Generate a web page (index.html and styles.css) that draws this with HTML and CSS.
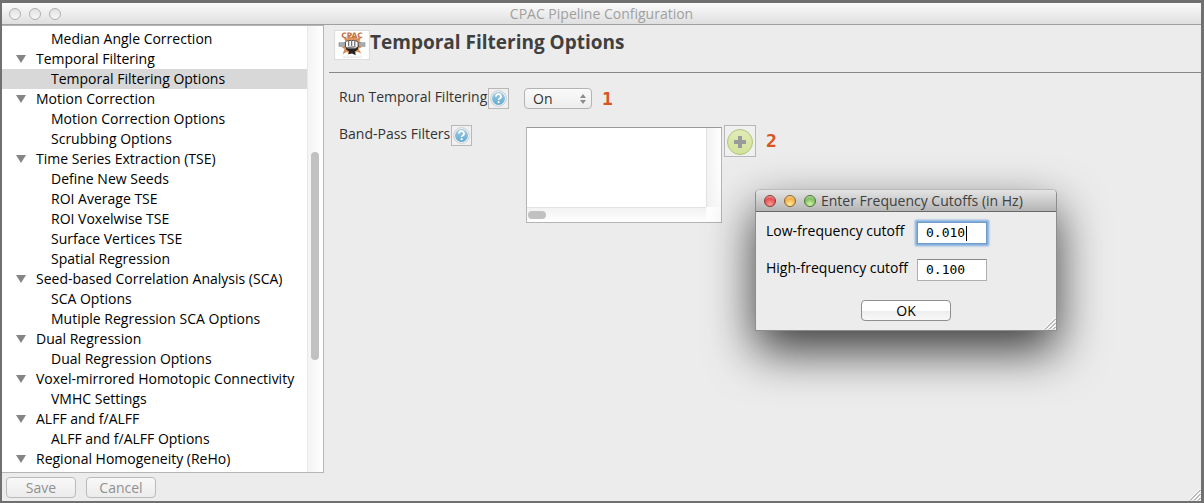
FILE: index.html
```html
<!DOCTYPE html>
<html lang="en">
<head>
<meta charset="utf-8">
<title>CPAC Pipeline Configuration</title>
<link rel="stylesheet" href="styles.css">
</head>
<body>
<svg class="defs" width="0" height="0" aria-hidden="true">
  <defs>
    <linearGradient id="blue" x1="0" y1="0" x2="0" y2="1">
      <stop offset="0" stop-color="#a4cde3"/><stop offset="1" stop-color="#5fa9d2"/>
    </linearGradient>
    <linearGradient id="lime" x1="0" y1="0" x2="0" y2="1">
      <stop offset="0" stop-color="#e2ebb9"/><stop offset="1" stop-color="#d2e29a"/>
    </linearGradient>
    <radialGradient id="burst"><stop offset="0" stop-color="#f0b080"/><stop offset="1" stop-color="#d8894f"/></radialGradient>
    <symbol id="help" viewBox="0 0 19 19">
      <circle cx="9.5" cy="9.5" r="7.8" fill="#f6f6f6" stroke="#c6cdd1"/>
      <circle cx="9.5" cy="9.5" r="6.5" fill="url(#blue)"/>
      <path d="M7 7.600a2.500 2.300 0 1 1 3.800 1.800c-.9.600-1.200.9-1.200 1.700" fill="none" stroke="#fff" stroke-width="1.700"/>
      <circle cx="9.6" cy="13.2" r="1.1" fill="#fff"/>
    </symbol>
    <symbol id="grip" viewBox="0 0 12 12">
      <path d="M1 11.500 11.500 1M5 11.500 11.500 5M9 11.500 11.500 9" fill="none" stroke="#fff" stroke-width="2.500"/>
      <path d="M1 11.500 11.500 1M5 11.500 11.500 5M9 11.500 11.500 9" fill="none" stroke="#777"/>
    </symbol>
  </defs>
</svg>
<div class="window">
  <header class="titlebar">
    <span class="lights"><i></i><i></i><i></i></span>
    <span class="title">CPAC Pipeline Configuration</span>
  </header>
  <div class="body">
    <nav class="sidebar">
      <ul class="tree">
        <li class="leaf">Median Angle Correction</li>
        <li class="branch">Temporal Filtering</li>
        <li class="leaf selected">Temporal Filtering Options</li>
        <li class="branch">Motion Correction</li>
        <li class="leaf">Motion Correction Options</li>
        <li class="leaf">Scrubbing Options</li>
        <li class="branch">Time Series Extraction (TSE)</li>
        <li class="leaf">Define New Seeds</li>
        <li class="leaf">ROI Average TSE</li>
        <li class="leaf">ROI Voxelwise TSE</li>
        <li class="leaf">Surface Vertices TSE</li>
        <li class="leaf">Spatial Regression</li>
        <li class="branch">Seed-based Correlation Analysis (SCA)</li>
        <li class="leaf">SCA Options</li>
        <li class="leaf">Mutiple Regression SCA Options</li>
        <li class="branch">Dual Regression</li>
        <li class="leaf">Dual Regression Options</li>
        <li class="branch">Voxel-mirrored Homotopic Connectivity</li>
        <li class="leaf">VMHC Settings</li>
        <li class="branch">ALFF and f/ALFF</li>
        <li class="leaf">ALFF and f/ALFF Options</li>
        <li class="branch">Regional Homogeneity (ReHo)</li>
      </ul>
      <div class="track"><div class="thumb"></div></div>
    </nav>
    <main class="page">
      <div class="heading">
        <svg class="logo" viewBox="0 0 36 30" aria-hidden="true">
          <path fill="#fff" d="M0 0h36v30H0z"/>
          <path fill="url(#burst)" d="M9 6l4 2 2-3 3 2 3-2 2 3 5-2-2 5 3 2-3 2 2 3-3 1 3 5-5-2-2 3-3-2-4 2-1-3-5 3 2-6-3-1 3-2-3-3 4-1z"/>
          <path fill="#a9adb0" stroke="#777" stroke-width=".5" d="M4 12.500h7v4H4zM25 12.500h7v4h-7z"/>
          <path fill="#222" d="M11 16h14l-1 4-3 2 1 4-4-2-4 1 1-3-3-2z"/>
          <path fill="#fff" stroke="#222" stroke-width=".8" d="M11 12q1-2 3.500-1.500 1.500-1 3 0 2-1 3.500 0 3-.5 3.500 2V17l-3 2h-8L11 17z"/>
          <path stroke="#222" stroke-width=".9" fill="none" d="M14.500 11v5M17.700 11v5M21 11v5M13 17.500l9-.5"/>
          <text class="logo-text" x="18" y="8" text-anchor="middle">CPAC</text>
          <path stroke="#bbb" stroke-width=".7" stroke-dasharray="1 .5" d="M8 28h21"/>
        </svg>
        <h1>Temporal Filtering Options</h1>
      </div>
      <form class="options">
        <div class="field"><label for="run">Run Temporal Filtering</label><button type="button" class="help" aria-label="Help: Run Temporal Filtering"><svg><use href="#help"/></svg></button></div>
        <div class="control">
          <span class="popup"><select id="run"><option>On</option><option>Off</option></select>
            <svg viewBox="0 0 6 12" aria-hidden="true"><path fill="#8c8c8c" d="M3 1l3 4H0zM3 11l3-4H0z"/></svg></span>
          <span class="step first">1</span>
        </div>
        <div class="field"><span>Band-Pass Filters</span><button type="button" class="help" aria-label="Help: Band-Pass Filters"><svg><use href="#help"/></svg></button></div>
        <div class="control filters">
          <div class="listbox" role="listbox" aria-label="Band-Pass Filters">
            <div class="items"></div><div class="vbar"></div><div class="hbar"><div class="knob"></div></div>
          </div>
          <button type="button" class="add" aria-label="Add filter"><svg viewBox="0 0 30 30"><circle cx="15" cy="16" r="12.500" fill="url(#lime)" stroke="#afc678"/><path d="M13 10h4v4h4v4h-4v4h-4v-4H9v-4h4z" fill="#9a9a9a"/></svg></button>
          <span class="step">2</span>
        </div>
      </form>
    </main>
  </div>
  <footer class="footer">
    <button type="button" disabled>Save</button><button type="button" disabled>Cancel</button>
    <svg class="grip"><use href="#grip"/></svg>
  </footer>
</div>
<section class="dialog" role="dialog" aria-labelledby="dlg">
  <header class="dialog-bar">
    <span class="lights color"><i></i><i></i><i></i></span>
    <span id="dlg">Enter Frequency Cutoffs (in Hz)</span>
  </header>
  <form class="dialog-body">
    <div class="entry"><label for="low">Low-frequency cutoff</label><span class="box focused"><input id="low" value="0.010"></span></div>
    <div class="entry"><label for="high">High-frequency cutoff</label><span class="box"><input id="high" value="0.100"></span></div>
    <button type="button" class="ok">OK</button>
  </form>
  <svg class="grip"><use href="#grip"/></svg>
</section>
</body>
</html>
```
FILE: styles.css
```css
* { box-sizing: border-box; }
body {
  margin: 0;
  font: 14px/20px "Open Sans", "Noto Sans", sans-serif;
  color: #000;
  background: #707070;
}
button, input, select { font: inherit; color: inherit; margin: 0; padding: 0; }
.defs { position: absolute; }
.window {
  min-height: 100vh;
  border: solid #707070;
  border-width: 3px 3px 2px 2px;
  background: #ececec;
  display: flex;
  flex-direction: column;
}
.titlebar {
  height: 22px;
  display: flex;
  align-items: center;
  border-bottom: 1px solid #9f9f9f;
  background: linear-gradient(#fbfbfb, #dfdfdf);
  color: #a0a0a0;
}
.titlebar .title { flex: 1; text-align: center; padding-right: 66px; }
.lights { display: flex; gap: 8px; padding-left: 7px; width: 66px; }
.lights i {
  width: 12px;
  height: 12px;
  border-radius: 50%;
  border: 1px solid #b0b0b0;
  background: linear-gradient(#e2e2e2, #f6f6f6);
}
.body { display: flex; flex: 1; }
.sidebar {
  width: 322px;
  display: flex;
  background: #fff;
  border: solid #b5b5b5;
  border-width: 1px 1px 1px 0;
}
.tree { flex: 1; list-style: none; margin: 0; padding: 3px 0; }
.tree li { display: flex; align-items: center; height: 20px; white-space: nowrap; }
.leaf { padding-left: 49px; }
.branch::before {
  content: "";
  margin: 0 10px 0 14px;
  border: solid transparent;
  border-width: 8px 5px 0;
  border-top-color: #858585;
}
.selected { background: #d8d8d8; }
.track { width: 16px; padding: 126px 4px 0 3px; border-left: 1px solid #e8e8e8; background: linear-gradient(90deg, #f4f4f4, #fff); }
.thumb { height: 208px; width: 8px; border-radius: 4px; background: #c1c1c1; }
.page { flex: 1; padding-left: 5px; color: #333; }
.heading {
  display: flex;
  align-items: flex-start;
  height: 48px;
  padding: 5px 0 0 5px;
  border-bottom: 1px solid #888;
}
.logo { width: 36px; height: 30px; border: 1px solid #ddd; }
.logo-text { font: bold 8px "DejaVu Sans", sans-serif; fill: #c0703c; }
h1 { margin: 0; font: bold 19px/24px "Open Sans", "Noto Sans", sans-serif; color: #404040; }
.options {
  display: grid;
  grid-template-columns: 185px 1fr;
  row-gap: 15px;
  padding: 15px 10px;
}
.field, .control { display: flex; align-items: flex-start; }
.field { gap: 1px; line-height: 18px; }
.help, .add {
  flex: none;
  width: 21px;
  height: 21px;
  border: 1px solid #b8b8b8;
  background: #f0f0f0;
}
.help svg { display: block; width: 19px; height: 19px; }
.popup { position: relative; }
.popup select {
  display: block;
  appearance: none;
  width: 68px;
  height: 21px;
  padding-left: 8px;
  border: 1px solid #b3b3b3;
  border-radius: 4px;
  background: linear-gradient(#fafafa, #ededed);
}
.popup svg { position: absolute; right: 6px; top: 5px; width: 6px; height: 12px; pointer-events: none; }
.step { margin-left: 10px; font: bold 18px/32px "DejaVu Sans Mono", monospace; color: #d9541e; }
.step.first { line-height: 22px; }
.control { max-height: 98px; }
.filters { padding-left: 2px; margin-top: -1px; }
.field + .filters { margin-top: 0; }
.listbox {
  display: grid;
  grid-template: 1fr 15px / 1fr 15px;
  width: 196px;
  height: 96px;
  margin-top: 2px;
  border: 1px solid #b5b5b5;
  border-top-color: #999;
  background: #fff;
}
.vbar { border-left: 1px solid #e2e2e2; background: linear-gradient(90deg, #f2f2f2, #fff); }
.hbar { padding: 3px 1px; border-top: 1px solid #e2e2e2; background: linear-gradient(#f2f2f2, #fff); }
.knob { width: 18px; height: 8px; border-radius: 4px; background: #c1c1c1; }
.add { width: 32px; height: 32px; margin-left: 2px; }
.add svg { display: block; width: 30px; height: 30px; }
.footer { display: flex; align-items: center; gap: 10px; height: 28px; padding: 1px 0 0 4px; }
.footer button {
  width: 70px;
  height: 21px;
  line-height: 18px;
  border: 1px solid #bbb;
  border-radius: 4px;
  background: linear-gradient(#f8f8f8, #ececec);
  color: #909090;
}
.grip { width: 12px; height: 12px; }
.footer .grip { margin-left: auto; align-self: flex-end; }
.dialog {
  position: absolute;
  left: 755px;
  top: 189px;
  width: 302px;
  border: 1px solid #8d8d8d;
  border-top-color: #bbb;
  border-radius: 5px 5px 0 0;
  background: #ececec;
  box-shadow: 0 20px 48px rgba(0, 0, 0, .75);
}
.dialog-bar {
  display: flex;
  align-items: center;
  height: 22px;
  border-bottom: 1px solid #696969;
  border-radius: 4px 4px 0 0;
  background: linear-gradient(#e4e4e4, #b5b5b5);
  color: #404040;
}
.color { padding-left: 8px; width: 65px; }
.color i { border-color: #7f3b38; background: radial-gradient(circle at 50% 85%, #ff9d96, #e64f50 60%, #f6c8c5); }
.color i + i { border-color: #8c622c; background: radial-gradient(circle at 50% 85%, #ffee9c, #f2ad47 60%, #fbe6c0); }
.color i + i + i { border-color: #4a7437; background: radial-gradient(circle at 50% 85%, #d0f5a8, #82be60 60%, #d9edcc); }
.dialog-body { display: flex; flex-direction: column; padding: 10px 10px 9px; gap: 15px; }
.entry { display: flex; align-items: flex-start; gap: 10px; height: 22px; line-height: 18px; }
.entry label { width: 141px; white-space: nowrap; }
.box { position: relative; display: flex; width: 70px; height: 22px; border: 1px solid #b0b0b0; border-top-color: #888; background: #fff; }
.box input { width: 100%; padding-left: 8px; border: 0; outline: 0; background: none; font: 13px/20px "DejaVu Sans Mono", monospace; }
.focused { border-color: #6f9dce; box-shadow: 0 0 2px 2px #7dabdc; }
.focused::after { content: ""; position: absolute; left: 48px; top: 3px; width: 1px; height: 15px; background: #000; }
.ok {
  align-self: center;
  width: 90px;
  height: 21px;
  margin-top: 4px;
  line-height: 18px;
  border: 1px solid #8f8f8f;
  border-radius: 4px;
  background: linear-gradient(#fff 50%, #ededed 50%, #f8f8f8);
}
.dialog .grip { position: absolute; right: 0; bottom: 0; }
```
